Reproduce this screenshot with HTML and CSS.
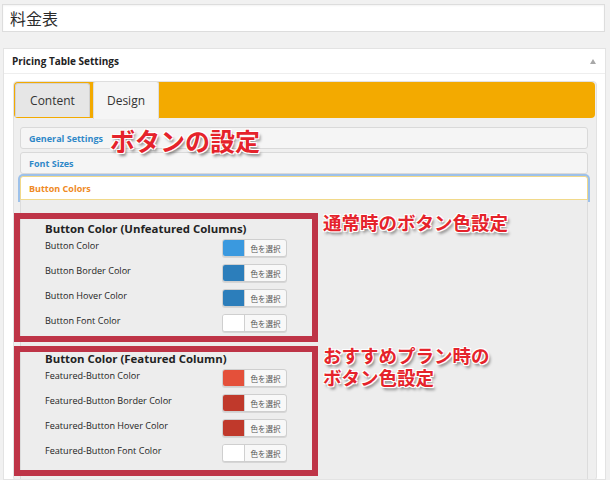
FILE: index.html
```html
<!DOCTYPE html>
<html lang="ja">
<head>
<meta charset="utf-8">
<title>料金表</title>
<link rel="stylesheet" href="styles.css">
</head>
<body>
<div class="page">
  <div class="title-box"><span class="title">料金表</span></div>
  <div class="postbox">
    <div class="postbox-header">
      <h3>Pricing Table Settings</h3>
      <span class="toggle"></span>
    </div>
    <div class="inside">
      <div class="tabs">
        <ul class="tabnav">
          <li class="tab">Content</li>
          <li class="tab active">Design</li>
        </ul>
        <div class="tabpanel">
          <div class="accordion">
            <div class="acc-head">General Settings</div>
            <div class="acc-head">Font Sizes</div>
            <div class="acc-head active">Button Colors</div>
            <div class="acc-body">
              <div class="group-row">
                <section class="group g1">
                  <h4>Button Color (Unfeatured Columns)</h4>
                  <div class="field"><span class="label">Button Color</span><span class="picker"><span class="swatch c-blue"></span><span class="pick-text">色を選択</span></span></div>
                  <div class="field"><span class="label">Button Border Color</span><span class="picker"><span class="swatch c-darkblue"></span><span class="pick-text">色を選択</span></span></div>
                  <div class="field"><span class="label">Button Hover Color</span><span class="picker"><span class="swatch c-darkblue"></span><span class="pick-text">色を選択</span></span></div>
                  <div class="field"><span class="label">Button Font Color</span><span class="picker"><span class="swatch c-white"></span><span class="pick-text">色を選択</span></span></div>
                </section>
                <p class="note">通常時のボタン色設定</p>
              </div>
              <div class="group-row">
                <section class="group g2">
                  <h4>Button Color (Featured Column)</h4>
                  <div class="field"><span class="label">Featured-Button Color</span><span class="picker"><span class="swatch c-red"></span><span class="pick-text">色を選択</span></span></div>
                  <div class="field"><span class="label">Featured-Button Border Color</span><span class="picker"><span class="swatch c-darkred"></span><span class="pick-text">色を選択</span></span></div>
                  <div class="field"><span class="label">Featured-Button Hover Color</span><span class="picker"><span class="swatch c-darkred"></span><span class="pick-text">色を選択</span></span></div>
                  <div class="field"><span class="label">Featured-Button Font Color</span><span class="picker"><span class="swatch c-white"></span><span class="pick-text">色を選択</span></span></div>
                </section>
                <p class="note"><span class="note-line">おすすめプラン時の</span><span class="note-line">ボタン色設定</span></p>
              </div>
            </div>
            <p class="callout">ボタンの設定</p>
          </div>
        </div>
      </div>
    </div>
  </div>
</div>
</body>
</html>
```

FILE: styles.css
```css
* { box-sizing: border-box; }

html, body {
  margin: 0;
  padding: 0;
  height: 480px;
  overflow: hidden;
}

body {
  background: #f1f1f1;
  font-family: "Open Sans", "Noto Sans CJK JP", sans-serif;
  color: #333;
}

.page {
  padding-top: 4px;
}

.title-box {
  margin: 0 5px 0 2px;
  height: 28px;
  background: #fff;
  border: 1px solid #dddddd;
  box-shadow: inset 0 1px 2px rgba(0,0,0,.05);
  display: flex;
  align-items: center;
  padding-left: 7px;
}

.title {
  font-family: "Noto Sans CJK JP", sans-serif;
  font-size: 16px;
  color: #2a2a2a;
}

.postbox {
  margin: 16px 4px 0 3px;
  background: #fff;
  border: 1px solid #e3e3e3;
  height: 432px;
  overflow: hidden;
}

.postbox-header {
  height: 25px;
  border-bottom: 1px solid #eeeeee;
  display: flex;
  align-items: center;
  justify-content: space-between;
  padding: 0 9px 0 8px;
}

.postbox-header h3 {
  margin: 0;
  font-size: 10px;
  font-weight: 700;
  color: #222;
}

.toggle {
  width: 0;
  height: 0;
  border-left: 3px solid transparent;
  border-right: 3px solid transparent;
  border-bottom: 5px solid #a8a8a8;
}

.inside {
  padding: 7px 8px 0 9px;
}

.tabs {
  background: #efefef;
  border: 1px solid #e2e2e2;
  border-radius: 4px;
  height: 400px;
}

.tabnav {
  list-style: none;
  margin: 0 1px 0 0;
  padding: 1px 0 0 1px;
  height: 36px;
  background: #f3aa00;
  border-radius: 4px;
  display: flex;
  align-items: flex-start;
  gap: 3px;
}

.tab {
  height: 34px;
  width: 75px;
  background: #e6e6e6;
  border: 1px solid #d2d2d2;
  border-bottom: none;
  border-radius: 3px 3px 0 0;
  font-size: 12px;
  color: #333;
  display: flex;
  align-items: center;
  justify-content: center;
}

.tab.active {
  width: 66px;
  height: 38px;
  margin-top: -2px;
  background: #f5f5f5;
  border-color: #dedede;
  position: relative;
}

.tabpanel {
  padding: 9px 8px 0 6px;
}

.accordion {
  position: relative;
}

.acc-head {
  height: 22px;
  background: #f5f5f5;
  border: 1px solid #d9d9d9;
  border-radius: 3px;
  padding-left: 8px;
  display: flex;
  align-items: center;
  font-size: 9px;
  font-weight: 700;
  color: #2f88c8;
  margin-bottom: 3px;
}

.acc-head:nth-child(2) {
  margin-bottom: 2px;
}

.acc-head.active {
  height: 24px;
  margin-bottom: 0;
  background: #fff;
  border: 1px solid #f1d98a;
  border-radius: 3px 3px 0 0;
  box-shadow: 0 0 0 2px #9dc1ea;
  color: #ef8a25;
}

.acc-body {
  background: #ededed;
  border: 1px solid #dcdcdc;
  border-top: none;
  padding-top: 13px;
  height: 290px;
}

.group-row {
  display: flex;
  align-items: flex-start;
  gap: 5px;
  margin-left: -7px;
}

.group-row + .group-row {
  margin-top: 4px;
}

.group {
  width: 304px;
  border: 6px solid #be3447;
  padding: 3px 0 4px 25px;
}

.group.g2 {
  padding-top: 0;
  padding-bottom: 8px;
}

.group h4 {
  margin: 0 0 3px;
  font-size: 11.4px;
  line-height: 14px;
  font-weight: 700;
  color: #222;
  white-space: nowrap;
}

.field {
  display: flex;
  align-items: flex-start;
  height: 18px;
}

.field + .field {
  margin-top: 7px;
}

.label {
  width: 177px;
  font-size: 9.1px;
  line-height: 14px;
  color: #222;
  font-weight: 500;
}

.picker {
  width: 65px;
  height: 18px;
  display: flex;
  background: #f8f8f8;
  border: 1px solid #cfcfcf;
  border-radius: 3px;
  box-shadow: 0 1px 0 #d6d6d6;
  overflow: hidden;
}

.swatch {
  width: 22px;
  height: 100%;
  border-right: 1px solid #d0d0d0;
}

.c-blue { background: #3a99df; }
.c-darkblue { background: #2c7ebb; }
.c-white { background: #ffffff; }
.c-red { background: #e4503a; }
.c-darkred { background: #c0392b; }

.pick-text {
  flex: 1;
  display: flex;
  align-items: center;
  justify-content: center;
  font-family: "Noto Sans CJK JP", sans-serif;
  font-size: 7.5px;
  color: #555;
}

.note, .callout {
  margin: 0;
  font-family: "Noto Sans CJK JP", sans-serif;
  font-weight: 700;
  color: #e5232b;
  text-shadow: -1px -1px 0 #fff, 1px -1px 0 #fff, -1px 1px 0 #fff, 1px 1px 0 #fff,
    2px 3px 3px rgba(0,0,0,.45);
}

.note {
  font-size: 18.5px;
  line-height: 22px;
  margin-top: -2px;
  white-space: nowrap;
  display: flex;
  flex-direction: column;
}

.note-line {
  display: block;
  height: 22px;
}

.callout {
  position: absolute;
  left: 90px;
  top: 0;
  font-size: 25px;
  line-height: 27px;
  white-space: nowrap;
}
```
